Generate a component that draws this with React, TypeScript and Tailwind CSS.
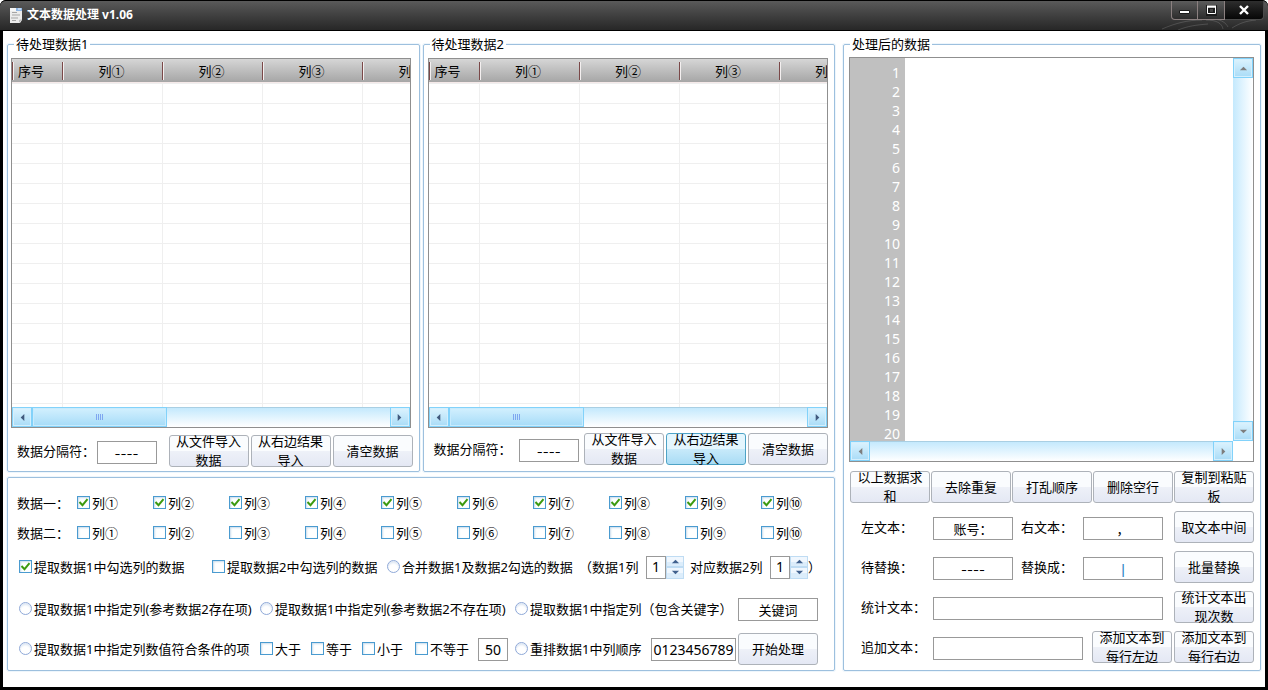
import clsx from "clsx";
import type { ReactNode } from "react";
import { useState } from "react";

const CIRCLED = ["①", "②", "③", "④", "⑤", "⑥", "⑦", "⑧", "⑨", "⑩"];
const ROWS = Array.from({ length: 17 }, (_, i) => i);
const LINES = Array.from({ length: 20 }, (_, i) => i + 1);

type Direction = "left" | "right" | "up" | "down";

const ARROWS: Record<Direction, string> = {
  left: "M7 1v8L3 5z",
  right: "M3 1v8l4-4z",
  up: "M1 7h8L5 3z",
  down: "M1 3h8L5 7z",
};

function Arrow({ direction }: { direction: Direction }) {
  return (
    <svg viewBox="0 0 10 10" className="size-[9px] fill-current">
      <path d={ARROWS[direction]} />
    </svg>
  );
}

function ScrollButton({
  direction,
  muted = false,
}: {
  direction: Direction;
  muted?: boolean;
}) {
  return (
    <button
      aria-label={direction}
      className={clsx(
        "flex size-5 shrink-0 items-center justify-center border border-[#82d2fa] bg-linear-to-b from-[#dcf3fe] to-[#a9dcf7] shadow-[inset_0_0_0_1px_#d4effd]",
        muted ? "text-[#7d7d7d]" : "text-[#41597d]"
      )}
    >
      <Arrow direction={direction} />
    </button>
  );
}

function HorizontalScroll({ thumb = false }: { thumb?: boolean }) {
  return (
    <div className="flex h-5 min-w-0 flex-1 border-t border-[#a9cfe3] bg-linear-to-b from-[#c4e9fd] to-white">
      <div className="-mt-px flex min-w-0 flex-1">
        <ScrollButton direction="left" muted={!thumb} />
        {thumb && (
          <div className="flex h-5 w-[135px] items-center justify-center gap-px border border-[#82d2fa] bg-linear-to-b from-[#d3f0fe] to-[#a6dcf8] shadow-[inset_0_0_0_1px_#c8ebfd]">
            {[0, 1, 2, 3].map((i) => (
              <span key={i} className="h-[6px] w-px bg-[#7fa6f0]" />
            ))}
          </div>
        )}
        <div className="flex-1" />
        <ScrollButton direction="right" muted={!thumb} />
      </div>
    </div>
  );
}

function GroupBox({
  title,
  className,
  children,
}: {
  title?: string;
  className?: string;
  children: ReactNode;
}) {
  return (
    <fieldset
      className={clsx(
        "min-w-0 rounded-[2px] border border-[#9dc0de] shadow-[0_0_0_1px_#eef6fc]",
        className
      )}
    >
      {title && (
        <legend className="ml-[6px] bg-white px-[2px] leading-4">{title}</legend>
      )}
      {children}
    </fieldset>
  );
}

function PushButton({
  children,
  active = false,
}: {
  children: ReactNode;
  active?: boolean;
}) {
  return (
    <button
      className={clsx(
        "flex h-8 w-20 shrink-0 items-center justify-center rounded-[3px] border px-1 text-center leading-[19px]",
        active
          ? "border-[#4ea3c6] bg-linear-to-b from-[#e4f6fe] from-50% via-[#c8eafa] via-50% to-[#a9dcf5]"
          : "border-[#adb2b9] bg-linear-to-b from-[#fafcfe] from-50% via-[#eef1f8] via-50% to-[#e4e8f4]"
      )}
    >
      {children}
    </button>
  );
}

function TextField({
  label,
  value = "",
  className,
}: {
  label: string;
  value?: string;
  className?: string;
}) {
  return (
    <input
      type="text"
      aria-label={label}
      defaultValue={value}
      className={clsx(
        "h-[23px] shrink-0 border border-[#999999] bg-white text-center outline-none",
        className
      )}
    />
  );
}

function Choice({
  type,
  label,
  name,
  checked = false,
  className,
}: {
  type: "checkbox" | "radio";
  label: string;
  name?: string;
  checked?: boolean;
  className?: string;
}) {
  return (
    <label
      className={clsx(
        "flex shrink-0 items-center gap-[2px] whitespace-nowrap",
        className
      )}
    >
      <span className="grid shrink-0 pb-[2px]">
        <input
          type={type}
          name={name}
          defaultChecked={checked}
          className={clsx(
            "peer col-start-1 row-start-1 size-[13px] appearance-none border",
            type === "radio"
              ? "rounded-full border-[#8fa9d8] bg-white shadow-[inset_0_2px_2px_#dfe8f4]"
              : "border-[#4a9bd0] bg-white shadow-[inset_1px_1px_2px_#c9dcec]"
          )}
        />
        <svg
          viewBox="0 0 13 13"
          className="pointer-events-none invisible col-start-1 row-start-1 size-[13px] fill-none stroke-[#3c9a10] stroke-2 peer-checked:visible"
        >
          <path d="M2.5 6l3 3.2 5-6" />
        </svg>
      </span>
      {label}
    </label>
  );
}

function Spinner({ label }: { label: string }) {
  const [value, setValue] = useState(1);
  const stepClass =
    "flex flex-1 items-center justify-center border border-[#bfdcf3] bg-linear-to-b from-[#f0f7fe] from-50% via-[#dcedfb] via-50% to-[#dcedfb] text-[#41618e]";

  return (
    <div className="flex h-[23px] w-[38px] shrink-0">
      <input
        type="text"
        aria-label={label}
        value={value}
        onChange={(e) => setValue(Number(e.target.value) || 1)}
        className="w-5 border border-[#999999] text-center text-sm outline-none"
      />
      <div className="flex w-[18px] flex-col">
        <button
          aria-label="增加"
          className={stepClass}
          onClick={() => setValue(value + 1)}
        >
          <Arrow direction="up" />
        </button>
        <button
          aria-label="减少"
          className={stepClass}
          onClick={() => setValue(Math.max(1, value - 1))}
        >
          <Arrow direction="down" />
        </button>
      </div>
    </div>
  );
}

function DataGrid() {
  return (
    <div className="border border-[#8f8f8f]">
      <div className="h-[348px] overflow-hidden">
        <table className="w-[450px] table-fixed border-separate border-spacing-0">
          <thead>
            <tr>
              {["序号", "列①", "列②", "列③", "列④"].map((name, i) => (
                <th
                  key={name}
                  className={clsx(
                    "h-6 border-b border-[#f5e9e9] bg-linear-to-b from-[#d6d6d6] to-[#a6a6a6] p-0 font-normal",
                    i === 0 ? "w-[50px] text-left" : "w-[100px] text-center"
                  )}
                >
                  <div
                    className={clsx(
                      "h-[18px] border-l border-[#7a4848] leading-[18px] shadow-[inset_1px_0_0_#f4f0f0]",
                      i === 0 ? "pl-[5px]" : "pr-[2px]"
                    )}
                  >
                    {name}
                  </div>
                </th>
              ))}
            </tr>
          </thead>
          <tbody>
            {ROWS.map((row) => (
              <tr key={row}>
                {[0, 1, 2, 3, 4].map((col) => (
                  <td
                    key={col}
                    className={clsx(
                      "h-5 border-t border-[#efefef] p-0",
                      col > 0 && "border-l"
                    )}
                  />
                ))}
              </tr>
            ))}
          </tbody>
        </table>
      </div>
      <div className="flex">
        <HorizontalScroll thumb />
      </div>
    </div>
  );
}

function ResultEditor() {
  return (
    <div className="border border-[#8f8f8f]">
      <div className="flex h-[383px]">
        <div className="w-[55px] shrink-0 overflow-hidden bg-[#c0c0c0] pt-[5px] pr-[5px] text-right text-sm leading-[19px] text-white">
          {LINES.map((n) => (
            <div key={n}>{n}</div>
          ))}
        </div>
        <textarea
          aria-label="处理后的数据"
          className="min-w-0 flex-1 resize-none outline-none"
        />
        <div className="flex w-5 flex-col justify-between bg-linear-to-r from-[#c4e9fd] to-white">
          <ScrollButton direction="up" muted />
          <ScrollButton direction="down" muted />
        </div>
      </div>
      <div className="flex pr-5">
        <HorizontalScroll />
      </div>
    </div>
  );
}

function TitleBar() {
  const buttonClass =
    "flex h-[19px] items-center justify-center border border-t-0 border-[#8b8080] bg-linear-to-b from-[#5c5c5c] to-[#2c2c2c]";

  return (
    <header className="relative flex h-[31px] items-start justify-between rounded-t-md border-b border-t border-black bg-linear-to-b from-[#5a5a5a] to-[#272727] pr-1 pl-[9px]">
      {/* smoke texture in the corner */}
      <svg
        viewBox="0 0 110 12"
        className="absolute right-1 bottom-0 h-3 w-[110px] fill-none stroke-white/15"
      >
        <path d="M8 11c14-6 26-9 40-9M24 12c10-4 18-5 30-6M52 2c10 0 16 3 17 9M60 1c8 1 12 4 14 8M78 10c8-5 14-7 24-8" />
      </svg>
      <div className="flex h-7 items-center gap-1">
        <svg viewBox="0 0 14 16" className="h-4 w-[14px]">
          <path d="M1 1h12v12l-2 3H1z" fill="#ececec" />
          <path d="M1 1h12v3H1z" fill="#f7f7f7" />
          <path d="M7 1h6v3H7z" fill="#8fb6e4" />
          <path d="M9 2h3" stroke="#eef5fd" fill="none" />
          <path d="M3 5.500h5M3 8h8M2 11h7M3 13.500h4" stroke="#a5a5a5" fill="none" />
          <path d="M13 12l-3 4v-3z" fill="#bdbdbd" />
        </svg>
        <h1 className="text-xs font-bold text-white">文本数据处理 v1.06</h1>
      </div>
      <div className="relative flex">
        <button
          aria-label="最小化"
          className={clsx(buttonClass, "w-[27px] rounded-bl-[4px]")}
        >
          <svg viewBox="0 0 13 13" className="size-[13px]">
            <path d="M1.500 6.500h10v3h-10z" fill="#fff" stroke="#1c1c1c" />
          </svg>
        </button>
        <button
          aria-label="最大化"
          className={clsx(buttonClass, "w-[27px] border-l-0")}
        >
          <svg viewBox="0 0 13 13" className="size-[13px]" fill="none">
            <path d="M3 3h7v7H3z" stroke="#1c1c1c" strokeWidth="4" />
            <path d="M2.500 3h8v6.500h-8z" stroke="#fff" />
            <path d="M2 2.500h9" stroke="#fff" strokeWidth="2" />
          </svg>
        </button>
        <button
          aria-label="关闭"
          className="flex h-[19px] w-[39px] items-center justify-center rounded-br-[4px] border border-t-0 border-l-0 border-[#4a4a4a] bg-linear-to-b from-[#2e2e2e] to-[#070707]"
        >
          <svg viewBox="0 0 12 12" className="size-3" fill="none">
            <path d="M2 2l8 8M10 2l-8 8" stroke="#fff" strokeWidth="2.4" />
          </svg>
        </button>
      </div>
    </header>
  );
}

export default function App() {
  return (
    <div className="flex min-h-screen flex-col rounded-t-md bg-black font-['Noto_Sans','Noto_Sans_CJK_SC',sans-serif] text-[13px] leading-5 text-black">
      <TitleBar />
      <main className="mx-[3px] mb-[3px] grid flex-1 grid-cols-[828fr_418fr] content-start gap-2 bg-white px-1 pt-[5px]">
        <div className="flex min-w-0 flex-col gap-[5px]">
          <div className="grid grid-cols-2 gap-[3px]">
            <GroupBox title="待处理数据1" className="pb-1">
              <div className="pt-[6px] pr-2 pl-[3px]">
                <DataGrid />
              </div>
              <div className="mt-[7px] flex items-center justify-between pr-[6px] pl-[9px]">
                <span className="w-20">数据分隔符：</span>
                <TextField
                  label="数据1分隔符"
                  value="----"
                  className="mt-[3px] mr-3 w-[60px] pt-[2px] font-[Inter]"
                />
                <div className="flex gap-[2px]">
                  <PushButton>从文件导入数据</PushButton>
                  <PushButton>从右边结果导入</PushButton>
                  <PushButton>清空数据</PushButton>
                </div>
              </div>
            </GroupBox>
            <GroupBox title="待处理数据2" className="pb-1">
              <div className="pt-[6px] pr-[6px] pl-1">
                <DataGrid />
              </div>
              <div className="mt-[5px] flex items-center justify-between pr-[6px] pl-[10px]">
                <span className="w-20">数据分隔符：</span>
                <TextField
                  label="数据2分隔符"
                  value="----"
                  className="mt-[3px] w-[60px] pt-[2px] font-[Inter]"
                />
                <div className="flex gap-[2px]">
                  <PushButton>从文件导入数据</PushButton>
                  <PushButton active>从右边结果导入</PushButton>
                  <PushButton>清空数据</PushButton>
                </div>
              </div>
            </GroupBox>
          </div>

          <GroupBox className="pt-[10px] pb-1">
            {["数据一", "数据二"].map((name, i) => (
              <div key={name} className="flex h-[30px] items-center pl-[9px]">
                <span className="w-[60px] shrink-0">{name}：</span>
                {CIRCLED.map((n) => (
                  <Choice
                    key={n}
                    type="checkbox"
                    label={`列${n}`}
                    checked={i === 0}
                    className="w-[76px]"
                  />
                ))}
              </div>
            ))}

            <div className="flex h-[38px] items-center pl-[11px] whitespace-nowrap">
              <Choice
                type="checkbox"
                label="提取数据1中勾选列的数据"
                checked
                className="w-[193px]"
              />
              <Choice
                type="checkbox"
                label="提取数据2中勾选列的数据"
                className="w-[175px]"
              />
              <Choice
                type="radio"
                name="mode"
                label="合并数据1及数据2勾选的数据"
                className="w-[192px]"
              />
              <span className="w-[67px] shrink-0">（数据1列</span>
              <Spinner label="数据1列" />
              <span className="ml-[6px] w-20 shrink-0">对应数据2列</span>
              <Spinner label="数据2列" />
              <span>）</span>
            </div>

            <div className="flex h-[46px] items-center pl-[11px]">
              <Choice
                type="radio"
                name="mode"
                label="提取数据1中指定列(参考数据2存在项)"
                className="w-[241px]"
              />
              <Choice
                type="radio"
                name="mode"
                label="提取数据1中指定列(参考数据2不存在项)"
                className="w-[255px]"
              />
              <Choice
                type="radio"
                name="mode"
                label="提取数据1中指定列（包含关键字）"
                className="w-[223px]"
              />
              <TextField label="关键词" value="关键词" className="w-20" />
            </div>

            <div className="flex h-[34px] items-center pl-[11px]">
              <Choice
                type="radio"
                name="mode"
                label="提取数据1中指定列数值符合条件的项"
                className="w-[241px]"
              />
              <Choice type="checkbox" label="大于" className="w-[51px]" />
              <Choice type="checkbox" label="等于" className="w-[51px]" />
              <Choice type="checkbox" label="小于" className="w-[53px]" />
              <Choice type="checkbox" label="不等于" className="w-[63px]" />
              <TextField label="数值" value="50" className="w-[30px] text-sm" />
              <Choice
                type="radio"
                name="mode"
                label="重排数据1中列顺序"
                className="ml-[7px] w-[136px]"
              />
              <TextField
                label="列顺序"
                value="0123456789"
                className="mr-[2px] w-[85px] text-sm"
              />
              <PushButton>开始处理</PushButton>
            </div>
          </GroupBox>
        </div>

        <GroupBox title="处理后的数据" className="pb-[7px]">
          <div className="pt-[5px] pr-[6px] pl-[5px]">
            <ResultEditor />
          </div>
          <div className="mt-[9px] flex justify-between gap-px pr-[6px] pl-[6px]">
            <PushButton>以上数据求和</PushButton>
            <PushButton>去除重复</PushButton>
            <PushButton>打乱顺序</PushButton>
            <PushButton>删除空行</PushButton>
            <PushButton>复制到粘贴板</PushButton>
          </div>
          <div className="mt-2 flex flex-col gap-2 pr-[6px] pl-[17px]">
            <div className="flex items-center">
              <span className="w-[72px] shrink-0">左文本：</span>
              <TextField
                label="左文本"
                value="账号："
                className="mt-[3px] w-20"
              />
              <span className="ml-2 w-[62px] shrink-0">右文本：</span>
              <TextField
                label="右文本"
                value="，"
                className="mt-[3px] mr-auto w-20"
              />
              <PushButton>取文本中间</PushButton>
            </div>
            <div className="flex items-center">
              <span className="w-[72px] shrink-0">待替换：</span>
              <TextField
                label="待替换"
                value="----"
                className="mt-[3px] w-20 pt-[2px] font-[Inter]"
              />
              <span className="ml-2 w-[62px] shrink-0">替换成：</span>
              <TextField
                label="替换成"
                value="|"
                className="mt-[3px] mr-auto w-20 font-semibold text-[#3088c8]"
              />
              <PushButton>批量替换</PushButton>
            </div>
            <div className="flex items-center">
              <span className="w-[72px] shrink-0">统计文本：</span>
              <TextField
                label="统计文本"
                className="mt-[3px] mr-auto w-[230px]"
              />
              <PushButton>统计文本出现次数</PushButton>
            </div>
            <div className="flex items-center">
              <span className="w-[72px] shrink-0">追加文本：</span>
              <TextField
                label="追加文本"
                className="mt-[3px] mr-auto w-[150px]"
              />
              <div className="flex gap-[2px]">
                <PushButton>添加文本到每行左边</PushButton>
                <PushButton>添加文本到每行右边</PushButton>
              </div>
            </div>
          </div>
        </GroupBox>
      </main>
    </div>
  );
}
